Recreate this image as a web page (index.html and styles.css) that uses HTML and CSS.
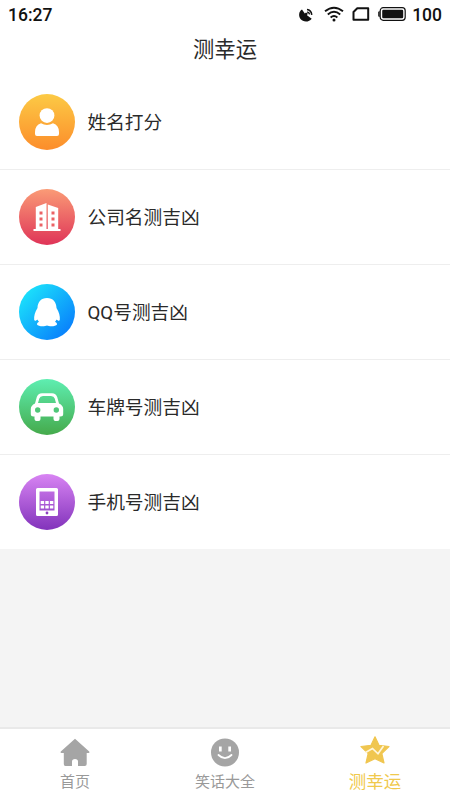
FILE: index.html
```html
<!DOCTYPE html>
<html lang="zh-CN">
<head>
<meta charset="utf-8">
<title>测幸运</title>
<link rel="stylesheet" href="styles.css">
</head>
<body>
<div class="app">
  <header class="status">
    <span>16:27</span>
    <div class="status-right">
      <svg class="dish" width="16" height="16" viewBox="0 0 16 16"><path d="M4 2.500C.6 4.500.4 9 2.500 12C5 15.300 11 15.500 13.700 11.700L9 8.300L9.800 6.500L8 5.500L6.800 6.500Z"/><path d="M9 2.500Q13.200 3 13.800 7.800M9.200 4.900Q11.200 5.200 11.600 7.400" fill="none" stroke="#111" stroke-width="1.500"/></svg>
      <svg class="wifi" width="20" height="16" viewBox="0 0 20 16"><path d="M1 5.300Q10-1.800 19 5.300M3.800 8.400Q10 3.300 16.200 8.400M6.600 11.400Q10 8.700 13.400 11.400" fill="none" stroke="#111" stroke-width="1.900"/><circle cx="10" cy="14" r="1.500"/></svg>
      <svg class="sim" width="18" height="14" viewBox="0 0 18 14"><path d="M5.300 1.200H16.200V12.800H1.500V5Z" fill="none" stroke="#111" stroke-width="2" stroke-linejoin="round"/></svg>
      <svg class="battery" width="28" height="14" viewBox="0 0 28 14"><rect x="2.200" y=".7" width="25" height="12.600" rx="3" fill="none" stroke="#111" stroke-width="1.200"/><path d="M1.700 4Q.2 4 .2 5.500V8.500Q.2 10 1.700 10Z"/><rect x="4.200" y="2.800" width="21" height="8.400" rx="1.200"/></svg>
      <span>100</span>
    </div>
  </header>
  <h1 class="title">测幸运</h1>
  <main class="list">
    <a class="row">
      <svg class="badge" viewBox="0 0 56 56">
        <defs><linearGradient id="orange" x1="0" y1="0" x2="0" y2="1"><stop stop-color="#fcca45"/><stop offset="1" stop-color="#fc8d2b"/></linearGradient></defs>
        <circle cx="28" cy="28" r="28" fill="url(#orange)"/>
        <path d="M16 40V38Q16 31.500 22 29.300Q28 32.500 34 29.300Q40 31.500 40 38V40Q40 42 38 42H18Q16 42 16 40Z" fill="#fff"/>
        <circle cx="28" cy="21.600" r="7.400" fill="#fff"/>
      </svg>
      <span>姓名打分</span>
    </a>
    <a class="row">
      <svg class="badge" viewBox="0 0 56 56">
        <defs><linearGradient id="red" x1="0" y1="0" x2="0" y2="1"><stop stop-color="#fa9b76"/><stop offset="1" stop-color="#df3458"/></linearGradient></defs>
        <circle cx="28" cy="28" r="28" fill="url(#red)"/>
        <path d="M16.800 18L27.500 14V40H28.800V15.500L39.200 19V40H41.500V42H14.500V40H16.800Z" fill="#fff"/>
        <path d="M20.500 22.500h3v3h-3zm0 6h3v3h-3zm0 6h3v3h-3zm12-12h3v3h-3zm0 6h3v3h-3zm0 6h3v3h-3z" fill="#eb6265"/>
      </svg>
      <span>公司名测吉凶</span>
    </a>
    <a class="row">
      <svg class="badge" viewBox="0 0 56 56">
        <defs><linearGradient id="blue" x1=".1" y1=".1" x2=".9" y2=".9"><stop stop-color="#1ce4fb"/><stop offset="1" stop-color="#087dfc"/></linearGradient></defs>
        <circle cx="28" cy="28" r="28" fill="url(#blue)"/>
        <path d="M28 14C22 14 18.700 18 18.500 24C16 28 14.800 32 15.200 36C15.800 37.500 17.500 36.500 18.500 35.500Q19 37 20 37.800Q17.500 39 18 40.500C19 42.500 25.500 42.700 28 41.500C30.500 42.700 37 42.500 38 40.500Q38.500 39 36 37.800Q37 37 37.500 35.500C38.500 36.500 40.200 37.500 40.800 36C41.200 32 40 28 37.500 24C37.300 18 34 14 28 14Z" fill="#fff"/>
      </svg>
      <span>QQ号测吉凶</span>
    </a>
    <a class="row">
      <svg class="badge" viewBox="0 0 56 56">
        <defs><linearGradient id="green" x1="0" y1="0" x2="0" y2="1"><stop stop-color="#5eeeb1"/><stop offset="1" stop-color="#45aa4b"/></linearGradient></defs>
        <circle cx="28" cy="28" r="28" fill="url(#green)"/>
        <path fill-rule="evenodd" d="M23 14.200H33Q37 14.200 38.200 18L40 24.500Q44.200 26.500 44.200 30V35Q44.200 37.500 41.500 37.500H40.500V40Q40.500 42 38.500 42H36.500Q34.500 42 34.500 40V37.500H21.500V40Q21.500 42 19.500 42H17.500Q15.500 42 15.500 40V37.500H14.500Q11.800 37.500 11.800 35V30Q11.800 26.500 16 24.500L17.800 18Q19 14.200 23 14.200ZM24 17Q21 17 20.300 19.500L19 24H37L35.700 19.500Q35 17 32 17Z" fill="#fff"/>
        <circle cx="18.700" cy="31" r="2.700" fill="#4fc779"/><circle cx="37.300" cy="31" r="2.700" fill="#4fc779"/>
      </svg>
      <span>车牌号测吉凶</span>
    </a>
    <a class="row">
      <svg class="badge" viewBox="0 0 56 56">
        <defs><linearGradient id="purple" x1="0" y1="0" x2="0" y2="1"><stop stop-color="#d884f3"/><stop offset="1" stop-color="#8233bb"/></linearGradient></defs>
        <circle cx="28" cy="28" r="28" fill="url(#purple)"/>
        <path fill-rule="evenodd" d="M18.500 14H37.500Q39 14 39 15.500V40.500Q39 42 37.500 42H18.500Q17 42 17 40.500V15.500Q17 14 18.500 14ZM20.500 17.500V36.500H35.500V17.500Z" fill="#fff"/>
        <path d="M21.700 27h3.400v3h-3.400zm4.600 0h3.400v3h-3.400zm4.600 0h3.400v3h-3.400zm-9.200 4.500h3.400v3h-3.400zm4.600 0h3.400v3h-3.400zm4.600 0h3.400v3h-3.400z" fill="#fff"/>
        <circle cx="28" cy="39" r="1.400" fill="#8c3fc0"/>
      </svg>
      <span>手机号测吉凶</span>
    </a>
  </main>
  <nav class="tabs">
    <a class="tab">
      <svg width="30" height="30" viewBox="0 0 30 30"><path d="M15 1.700L29.200 14.500Q30 16 28.500 16H26.700V27Q26.700 29 24.700 29H18V24.500Q18 22 15 22Q12 22 12 24.500V29H5.300Q3.800 29 3.800 27V16H1.500Q0 16 .8 14.500Z" fill="#a5a5a5"/></svg>
      <span>首页</span>
    </a>
    <a class="tab">
      <svg width="30" height="30" viewBox="0 0 30 30"><circle cx="15" cy="15.500" r="14" fill="#a5a5a5"/><path d="M9 9.500h2.700v5H9zm9.300 0H21v5h-2.700z" fill="#fff"/><path d="M8.500 18Q15 24.300 21.500 18" fill="none" stroke="#fff" stroke-width="1.800" stroke-linecap="round"/></svg>
      <span>笑话大全</span>
    </a>
    <a class="tab active">
      <svg width="30" height="30" viewBox="0 0 30 30"><path d="M15 1.800L19 10.300L29 11.500L21.800 18.500L24 28L15 23.600L6 28L8.200 18.500L1 11.500L11 10.300Z" fill="#f0c650" stroke="#f0c650" stroke-width="1.200" stroke-linejoin="round"/><path d="M5.500 17.500L12.500 13.500L18 18.800L23.500 11" fill="none" stroke="#fff6dc" stroke-width="1.700"/></svg>
      <span>测幸运</span>
    </a>
  </nav>
</div>
</body>
</html>
```
FILE: styles.css
```css
* { box-sizing: border-box; }
body {
  margin: 0;
  background: #f4f4f4;
  color: #2a2a2a;
  font-family: Roboto, "Noto Sans CJK SC", sans-serif;
}
.app { height: 800px; display: flex; flex-direction: column; }
.status {
  height: 28px;
  padding: 1px 8px 0;
  display: flex;
  align-items: center;
  justify-content: space-between;
  background: #fff;
  color: #111;
  font-size: 17.5px;
  font-weight: 500;
}
.status-right { display: flex; align-items: center; }
.status svg { fill: #111; }
.dish { margin-right: 10px; }
.wifi { margin-right: 8px; margin-bottom: 2px; }
.sim { margin-right: 8px; margin-bottom: 1px; }
.battery { margin-right: 6px; margin-bottom: 1px; }
.title {
  height: 47px;
  margin: 0;
  background: #fff;
  text-align: center;
  font-size: 21.3px;
  font-weight: 400;
  line-height: 43px;
}
.list { background: #fff; }
.row {
  height: 95px;
  padding: 0 19px;
  display: flex;
  align-items: center;
  gap: 12.500px;
  border-bottom: 1px solid #eee;
  font-size: 18.7px;
}
.row span { padding-bottom: 4px; }
.row:last-child { height: 94px; border-bottom: 0; }
.badge { width: 56px; height: 56px; }
.tabs {
  height: 73px;
  margin-top: auto;
  display: grid;
  grid-template-columns: repeat(3, 1fr);
  background: #fff;
  border-top: 2px solid #e9e9e9;
}
.tab {
  display: flex;
  flex-direction: column;
  align-items: center;
  padding-top: 8px;
  color: #999;
  font-size: 15px;
  line-height: 30px;
}
.active { padding-top: 6px; color: #f0c94c; font-size: 17.5px; line-height: 34px; }
```
